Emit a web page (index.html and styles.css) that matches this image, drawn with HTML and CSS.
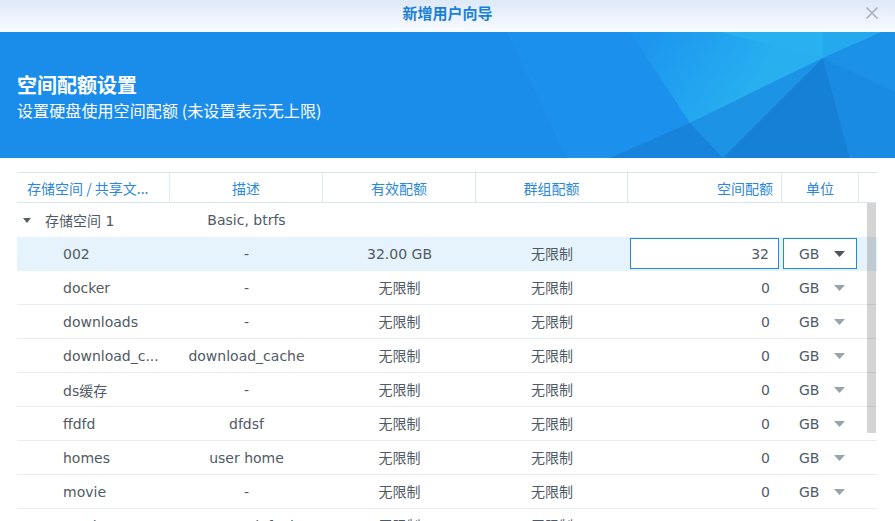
FILE: index.html
```html
<!DOCTYPE html>
<html lang="zh-CN">
<head>
<meta charset="utf-8">
<title>新增用户向导</title>
<link rel="stylesheet" href="styles.css">
</head>
<body>
<div class="dialog">
  <div class="titlebar">
    <span class="title">新增用户向导</span>
    <svg class="close" width="14" height="14" viewBox="0 0 14 14"><path d="M1.5 1.5L12.5 12.5M12.5 1.5L1.5 12.5"/></svg>
  </div>

  <div class="banner">
    <svg class="facets" viewBox="0 0 895 126" preserveAspectRatio="none">
      <defs>
        <linearGradient id="g1" x1="640" y1="10" x2="740" y2="75" gradientUnits="userSpaceOnUse">
          <stop offset="0" stop-color="#1c95ee"/>
          <stop offset="1" stop-color="#27aff0"/>
        </linearGradient>
      </defs>
      <polygon points="507,0 895,0 895,126 567,126" fill="#1d93ee" opacity="0.6"/>
      <polygon points="630,0 823,0 823,26 690,91" fill="url(#g1)"/>
      <polygon points="720,0 823,0 823,26" fill="#29b0f0"/>
      <polygon points="823,0 882,0 823,26" fill="#24a9ef"/>
      <polygon points="882,0 895,0 895,60 823,26" fill="#1b91e8"/>
      <polygon points="690,91 610,126 723,126" fill="#1883da"/>
      <polygon points="823,26 690,91 723,126" fill="#1c93e5"/>
      <polygon points="823,26 723,126 850,126" fill="#1680d6"/>
      <polygon points="823,26 850,126 895,126 895,60" fill="#1a8be2"/>
    </svg>
    <div class="banner-text">
      <h1 class="banner-title">空间配额设置</h1>
      <p class="banner-sub">设置硬盘使用空间配额 (未设置表示无上限)</p>
    </div>
  </div>

  <div class="grid">
    <div class="thead">
      <div class="th th-left">存储空间 / 共享文...</div>
      <div class="th">描述</div>
      <div class="th">有效配额</div>
      <div class="th">群组配额</div>
      <div class="th th-right">空间配额</div>
      <div class="th">单位</div>
      <div class="th th-end"></div>
    </div>

    <div class="tbody">
      <div class="row group">
        <div class="td name"><span class="caret"></span>存储空间 1</div>
        <div class="td center">Basic, btrfs</div>
        <div class="td"></div>
        <div class="td"></div>
        <div class="td"></div>
        <div class="td"></div>
        <div class="td"></div>
      </div>

      <div class="row selected">
        <div class="td share">002</div>
        <div class="td center">-</div>
        <div class="td center">32.00 GB</div>
        <div class="td center cjk">无限制</div>
        <div class="td edit"><div class="input">32</div></div>
        <div class="td edit"><div class="select"><span class="unit-text">GB</span><svg class="arrow dark" width="11" height="6" viewBox="0 0 11 6"><path d="M0 0H11L5.5 6Z"/></svg></div></div>
        <div class="td"></div>
      </div>

      <div class="row">
        <div class="td share">docker</div>
        <div class="td center">-</div>
        <div class="td center cjk">无限制</div>
        <div class="td center cjk">无限制</div>
        <div class="td quota">0</div>
        <div class="td unit"><span class="unit-text">GB</span><svg class="arrow" width="11" height="6" viewBox="0 0 11 6"><path d="M0 0H11L5.5 6Z"/></svg></div>
        <div class="td"></div>
      </div>

      <div class="row">
        <div class="td share">downloads</div>
        <div class="td center">-</div>
        <div class="td center cjk">无限制</div>
        <div class="td center cjk">无限制</div>
        <div class="td quota">0</div>
        <div class="td unit"><span class="unit-text">GB</span><svg class="arrow" width="11" height="6" viewBox="0 0 11 6"><path d="M0 0H11L5.5 6Z"/></svg></div>
        <div class="td"></div>
      </div>

      <div class="row">
        <div class="td share">download_c...</div>
        <div class="td center">download_cache</div>
        <div class="td center cjk">无限制</div>
        <div class="td center cjk">无限制</div>
        <div class="td quota">0</div>
        <div class="td unit"><span class="unit-text">GB</span><svg class="arrow" width="11" height="6" viewBox="0 0 11 6"><path d="M0 0H11L5.5 6Z"/></svg></div>
        <div class="td"></div>
      </div>

      <div class="row">
        <div class="td share">ds缓存</div>
        <div class="td center">-</div>
        <div class="td center cjk">无限制</div>
        <div class="td center cjk">无限制</div>
        <div class="td quota">0</div>
        <div class="td unit"><span class="unit-text">GB</span><svg class="arrow" width="11" height="6" viewBox="0 0 11 6"><path d="M0 0H11L5.5 6Z"/></svg></div>
        <div class="td"></div>
      </div>

      <div class="row">
        <div class="td share">ffdfd</div>
        <div class="td center">dfdsf</div>
        <div class="td center cjk">无限制</div>
        <div class="td center cjk">无限制</div>
        <div class="td quota">0</div>
        <div class="td unit"><span class="unit-text">GB</span><svg class="arrow" width="11" height="6" viewBox="0 0 11 6"><path d="M0 0H11L5.5 6Z"/></svg></div>
        <div class="td"></div>
      </div>

      <div class="row">
        <div class="td share">homes</div>
        <div class="td center">user home</div>
        <div class="td center cjk">无限制</div>
        <div class="td center cjk">无限制</div>
        <div class="td quota">0</div>
        <div class="td unit"><span class="unit-text">GB</span><svg class="arrow" width="11" height="6" viewBox="0 0 11 6"><path d="M0 0H11L5.5 6Z"/></svg></div>
        <div class="td"></div>
      </div>

      <div class="row">
        <div class="td share">movie</div>
        <div class="td center">-</div>
        <div class="td center cjk">无限制</div>
        <div class="td center cjk">无限制</div>
        <div class="td quota">0</div>
        <div class="td unit"><span class="unit-text">GB</span><svg class="arrow" width="11" height="6" viewBox="0 0 11 6"><path d="M0 0H11L5.5 6Z"/></svg></div>
        <div class="td"></div>
      </div>

      <div class="row">
        <div class="td share">music</div>
        <div class="td center">System default</div>
        <div class="td center cjk">无限制</div>
        <div class="td center cjk">无限制</div>
        <div class="td quota">0</div>
        <div class="td unit"><span class="unit-text">GB</span><svg class="arrow" width="11" height="6" viewBox="0 0 11 6"><path d="M0 0H11L5.5 6Z"/></svg></div>
        <div class="td"></div>
      </div>

      <div class="scrollbar"></div>
    </div>
  </div>
</div>
</body>
</html>
```

FILE: styles.css
```css
html, body {
  margin: 0;
  padding: 0;
  background: #ffffff;
}

body {
  width: 895px;
  height: 521px;
  overflow: hidden;
  font-family: "DejaVu Sans", "Noto Sans CJK SC", sans-serif;
  font-size: 14px;
  color: #505a64;
}

.dialog {
  width: 895px;
  height: 521px;
  overflow: hidden;
  background: #ffffff;
}

/* title bar */
.titlebar {
  height: 32px;
  display: grid;
  grid-template-columns: 1fr auto 1fr;
  align-items: center;
  background: linear-gradient(#dde9f8, #f9fbff);
}

.title {
  grid-column: 2;
  font-family: "Noto Sans CJK SC", sans-serif;
  font-size: 15px;
  font-weight: 700;
  color: #1b7fd6;
  line-height: 20px;
  margin-top: -7px;
}

.close {
  grid-column: 3;
  justify-self: end;
  margin-right: 16px;
  margin-top: -6px;
}

.close path {
  stroke: #aab1b8;
  stroke-width: 1.6;
  fill: none;
}

/* banner */
.banner {
  position: relative;
  height: 126px;
  background: #1a8deb;
  overflow: hidden;
}

.facets {
  position: absolute;
  left: 0;
  top: 0;
  width: 895px;
  height: 126px;
}

.banner-text {
  position: relative;
  padding: 41px 0 0 17px;
  color: #ffffff;
  font-family: "Noto Sans CJK SC", sans-serif;
}

.banner-title {
  margin: 0;
  font-size: 20px;
  line-height: 24px;
  font-weight: 700;
}

.banner-sub {
  margin: 2px 0 0;
  font-size: 16px;
  line-height: 22px;
  font-weight: 400;
  letter-spacing: 0.1px;
}

/* grid */
.grid {
  width: 860px;
  margin: 14px 0 0 17px;
}

.thead,
.row {
  display: grid;
  grid-template-columns: 153px 153px 153px 152px 154px 77px 18px;
}

.thead {
  height: 31px;
  box-sizing: border-box;
  border-top: 1px solid #d9e5f0;
  border-bottom: 1px solid #d9e5f0;
}

.th {
  display: flex;
  align-items: center;
  justify-content: center;
  border-right: 1px solid #dde7f1;
  color: #2b88d8;
  font-size: 14px;
  font-family: "Noto Sans CJK SC", sans-serif;
  white-space: nowrap;
  overflow: hidden;
}

.th-left {
  justify-content: flex-start;
  padding-left: 10px;
}

.th-right {
  justify-content: flex-end;
  padding-right: 8px;
}

.th-end {
  border-right: none;
}

.tbody {
  position: relative;
}

.row {
  height: 34px;
  box-sizing: border-box;
  border-bottom: 1px solid #e9edf1;
}

.row.group {
  border-bottom-color: transparent;
}

.row.selected {
  background: #e6f3fc;
  border-bottom-color: #e6f3fc;
}

.td {
  display: flex;
  align-items: center;
  white-space: nowrap;
  overflow: hidden;
}

.td.center {
  justify-content: center;
}

.td.cjk {
  font-family: "Noto Sans CJK SC", sans-serif;
  padding-bottom: 2px;
}

.td.share {
  padding-left: 46px;
}

.td.name {
  padding-left: 6px;
}

.caret {
  width: 0;
  height: 0;
  border-left: 4px solid transparent;
  border-right: 4px solid transparent;
  border-top: 5px solid #555d66;
  margin-right: 14px;
  margin-top: 1px;
}

.td.quota {
  justify-content: flex-end;
  padding-right: 12px;
}

.td.unit {
  padding-left: 17px;
}

.unit-text {
  width: 35px;
}

.arrow path {
  fill: #9aa2ab;
}

.arrow.dark path {
  fill: #4f565e;
}

.td.edit {
  align-items: stretch;
  padding: 1px 0 1px;
}

.input {
  flex: 0 0 149px;
  margin-left: 2px;
  box-sizing: border-box;
  border: 1px solid #1e87e0;
  background: #ffffff;
  display: flex;
  align-items: center;
  justify-content: flex-end;
  padding-right: 9px;
}

.select {
  flex: 0 0 74px;
  margin-left: 1px;
  box-sizing: border-box;
  border: 1px solid #1e87e0;
  background: #ffffff;
  display: flex;
  align-items: center;
  padding-left: 15px;
}

.scrollbar {
  position: absolute;
  left: 850px;
  top: 0;
  width: 9px;
  height: 230px;
  background: rgba(0, 0, 0, 0.17);
}
```
